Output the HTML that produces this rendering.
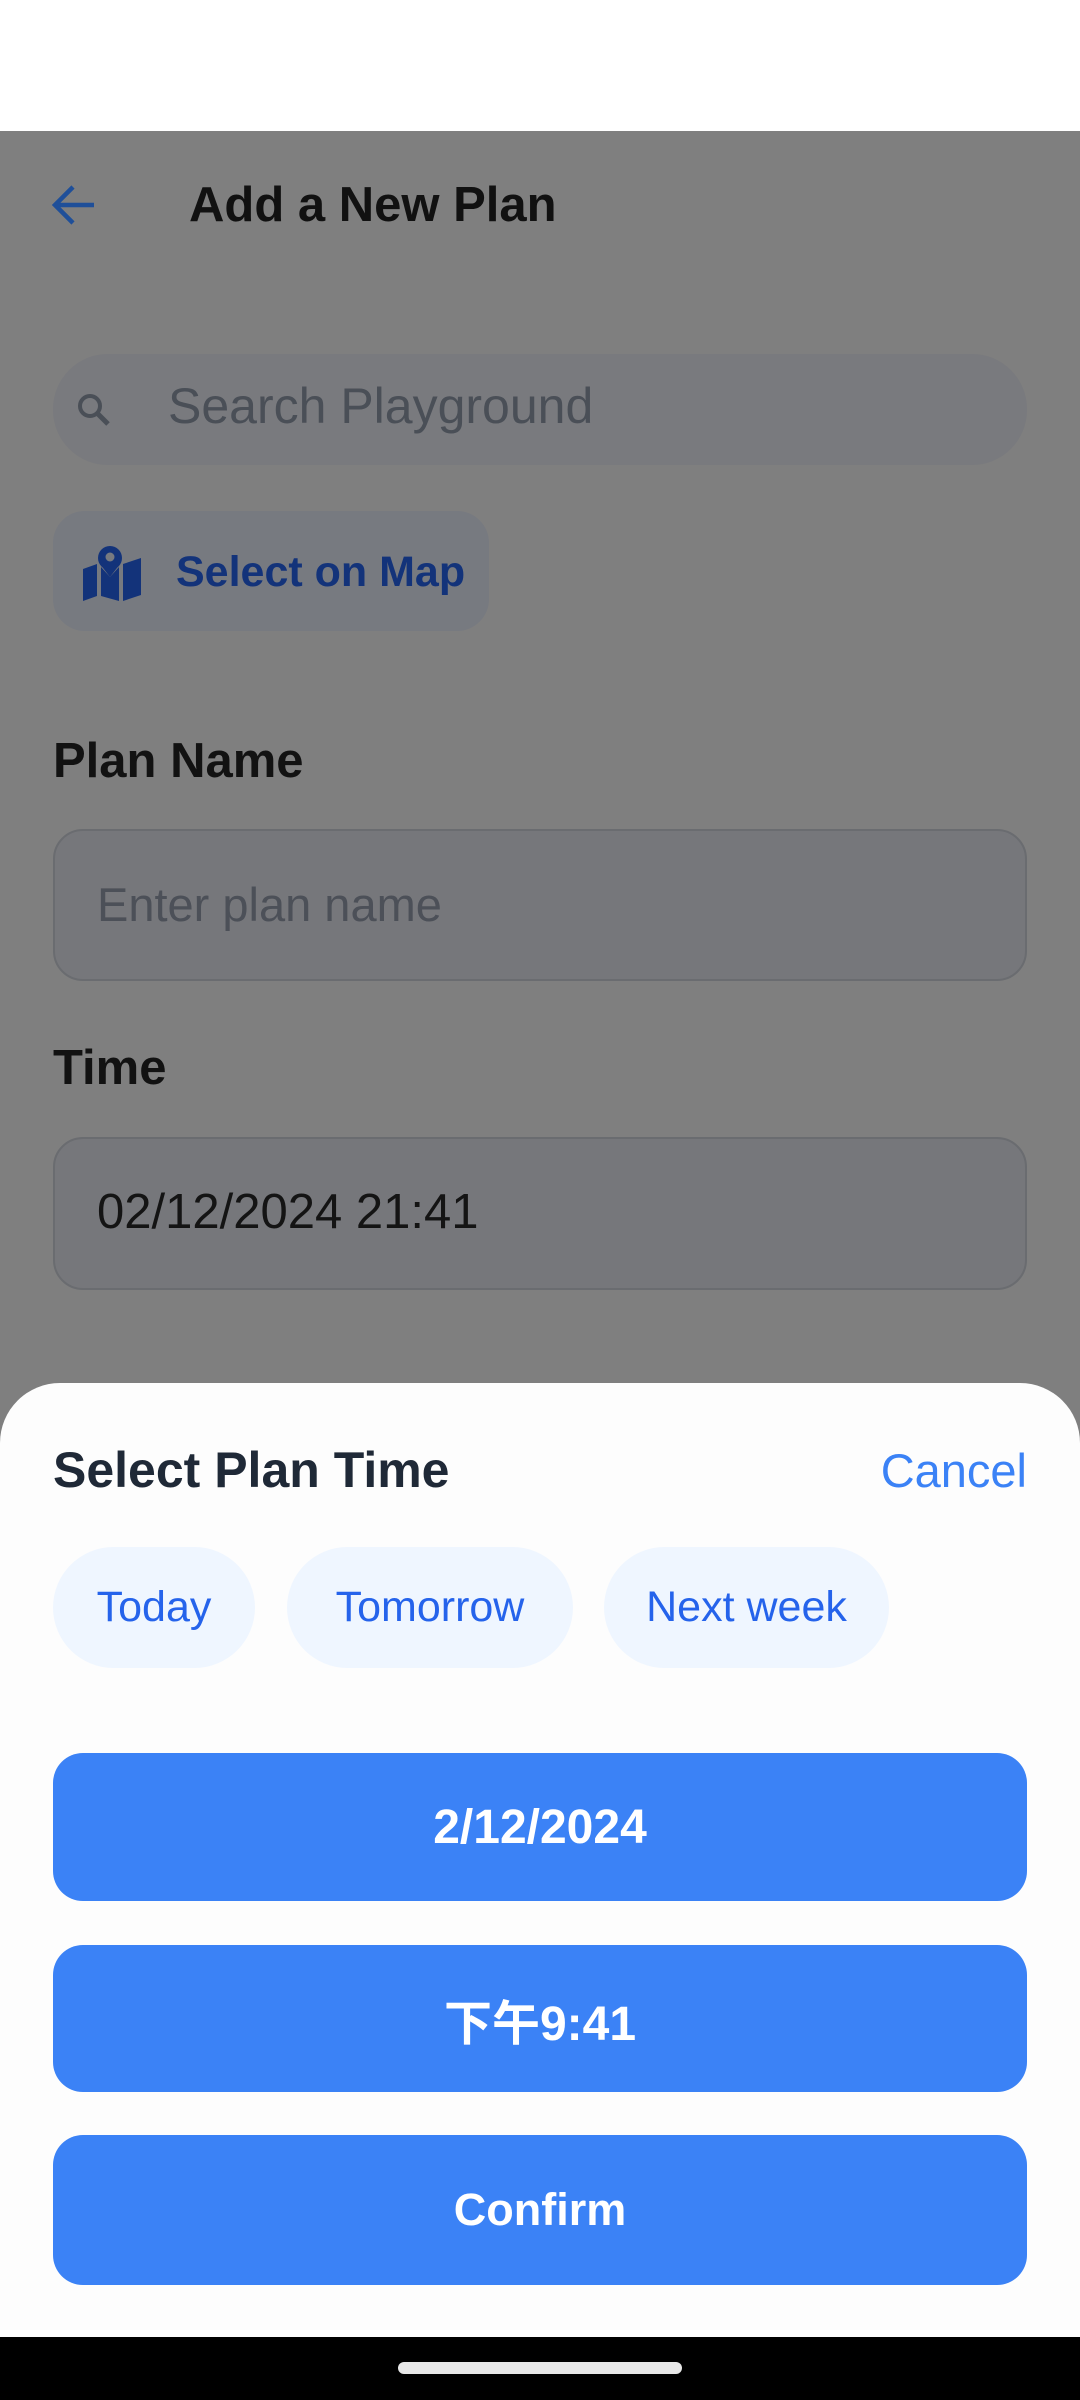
<!DOCTYPE html>
<html><head><meta charset="utf-8"><style>
*{margin:0;padding:0;box-sizing:border-box}
body{width:1080px;height:2400px;position:relative;overflow:hidden;background:#7f7f7f;font-family:"Liberation Sans","Noto Sans CJK SC",sans-serif}
.a{position:absolute}
.c{display:flex;align-items:center;justify-content:center}
</style></head><body>
<div class="a" style="left:0;top:0;width:1080px;height:131px;background:#fff"></div>
<svg class="a" style="left:50px;top:182px" width="46" height="46" viewBox="0 0 46 46"><path d="M44 23H6M23 5L5 23l18 18" stroke="#1f4f99" stroke-width="4.5" fill="none"/></svg>
<div class="a" style="left:189px;top:175px;font-size:49px;font-weight:bold;color:#111;line-height:60px">Add a New Plan</div>
<div class="a" style="left:53px;top:354px;width:974px;height:111px;border-radius:55px;background:#797a7e"></div>
<svg class="a" style="left:76px;top:392px" width="36" height="36" viewBox="0 0 36 36"><circle cx="14" cy="14" r="10" stroke="#4a4f57" stroke-width="4" fill="none"/><path d="M21 21l11 11" stroke="#4a4f57" stroke-width="5"/></svg>
<div class="a" style="left:168px;top:376px;font-size:50px;color:#4a4f57;line-height:60px">Search Playground</div>
<div class="a" style="left:53px;top:511px;width:436px;height:120px;border-radius:32px;background:#777a80"></div>
<svg class="a" style="left:83px;top:545px" width="58" height="56" viewBox="0 0 58 56"><path d="M0 24l14-5v32L0 56zM18 22l9 10 9-10v34l-18-5zM40 19l18-6v37l-18 6z" fill="#13337a"/><circle cx="27" cy="13" r="12" fill="#13337a"/><path d="M17 19l10 13 10-13z" fill="#13337a"/><circle cx="27" cy="12" r="4.5" fill="#777a80"/></svg>
<div class="a" style="left:176px;top:546px;font-size:43px;font-weight:bold;color:#13337a;line-height:52px">Select on Map</div>
<div class="a" style="left:53px;top:733px;font-size:49px;font-weight:bold;color:#121212;line-height:56px">Plan Name</div>
<div class="a" style="left:53px;top:829px;width:974px;height:152px;border-radius:30px;background:#76777b;border:2px solid #6a6c70"></div>
<div class="a" style="left:97px;top:877px;font-size:47px;color:#4c5058;line-height:56px">Enter plan name</div>
<div class="a" style="left:53px;top:1040px;font-size:49px;font-weight:bold;color:#121212;line-height:56px">Time</div>
<div class="a" style="left:53px;top:1137px;width:974px;height:153px;border-radius:30px;background:#76777b;border:2px solid #6a6c70"></div>
<div class="a" style="left:97px;top:1184px;font-size:49px;color:#141414;line-height:56px">02/12/2024 21:41</div>

<div class="a" style="left:0;top:1383px;width:1080px;height:960px;background:#fdfdfd;border-radius:60px 60px 0 0"></div>
<div class="a" style="left:53px;top:1441px;font-size:50px;font-weight:bold;color:#1f2937;line-height:58px">Select Plan Time</div>
<div class="a" style="right:53px;top:1442px;font-size:47px;color:#3b82f6;line-height:58px">Cancel</div>
<div class="a c" style="left:53px;top:1547px;width:202px;height:121px;border-radius:61px;background:#eff6ff;color:#2563eb;font-size:43px">Today</div>
<div class="a c" style="left:287px;top:1547px;width:286px;height:121px;border-radius:61px;background:#eff6ff;color:#2563eb;font-size:43px">Tomorrow</div>
<div class="a c" style="left:604px;top:1547px;width:285px;height:121px;border-radius:61px;background:#eff6ff;color:#2563eb;font-size:43px">Next week</div>
<div class="a c" style="left:53px;top:1753px;width:974px;height:148px;border-radius:30px;background:#3b82f6;color:#fff;font-size:48px;font-weight:bold">2/12/2024</div>
<div class="a c" style="left:53px;top:1945px;width:974px;height:147px;border-radius:30px;background:#3b82f6;color:#fff;font-size:48px;font-weight:bold">下午9:41</div>
<div class="a c" style="left:53px;top:2135px;width:974px;height:150px;border-radius:30px;background:#3b82f6;color:#fff;font-size:45px;font-weight:bold">Confirm</div>
<div class="a" style="left:0;top:2337px;width:1080px;height:63px;background:#000"></div>
<div class="a" style="left:398px;top:2362px;width:284px;height:12px;border-radius:6px;background:#e8e8e8"></div>
</body></html>
